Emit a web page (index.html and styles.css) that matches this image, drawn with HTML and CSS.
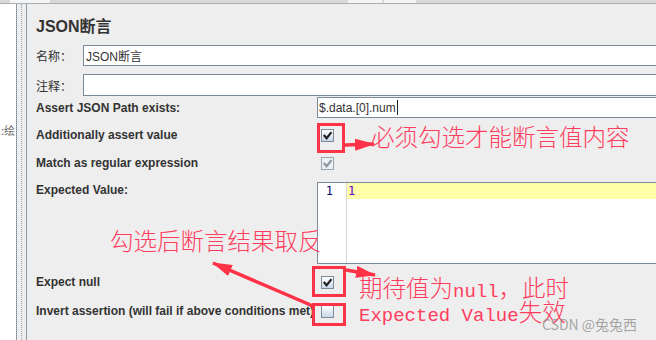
FILE: index.html
```html
<!DOCTYPE html>
<html>
<head>
<meta charset="utf-8">
<title>JSON断言</title>
<link rel="stylesheet" href="styles.css">
</head>
<body>
<div class="page">
	<div class="topbar"><span class="tab t1"></span><span class="tab t2"></span><span class="tab t3"></span></div>
	<div class="frame">
		<div class="tree"><span class="leaf">:绘</span></div>
		<div class="splitter"></div>
		<div class="panel">
			<h1>JSON断言</h1>
			<div class="field"><span class="cjk">名称：</span><div class="input">JSON断言</div></div>
			<div class="field note"><span class="cjk">注释：</span><div class="input"></div></div>

			<div class="opts">
				<div class="row path">
					<span class="lbl">Assert JSON Path exists:</span>
					<div class="input">$.data.[0].num<span class="caret"></span></div>
				</div>
				<div class="row r-add">
					<span class="lbl">Additionally assert value</span>
					<span class="check on"><svg viewBox="0 0 11 11"><path d="M2.5 5.8 L4.6 8.2 L8.8 3"/></svg></span>
				</div>
				<div class="row r-regex">
					<span class="lbl">Match as regular expression</span>
					<span class="check off"><svg viewBox="0 0 11 11"><path d="M2.5 5.8 L4.6 8.2 L8.8 3"/></svg></span>
				</div>
				<div class="row r-value">
					<span class="lbl">Expected Value:</span>
					<div class="editor">
						<div class="gutter">1</div>
						<div class="code"><div class="line">1</div></div>
					</div>
				</div>
				<div class="row r-null">
					<span class="lbl">Expect null</span>
					<span class="check on"><svg viewBox="0 0 11 11"><path d="M2.5 5.8 L4.6 8.2 L8.8 3"/></svg></span>
				</div>
				<div class="row r-invert">
					<span class="lbl">Invert assertion (will fail if above conditions met)</span>
					<span class="check"></span>
				</div>
			</div>
		</div>
	</div>

	<!-- annotations drawn over the screenshot -->
	<svg class="marks" width="656" height="340" viewBox="0 0 656 340">
		<defs>
			<marker id="head" viewBox="0 0 20 12" refX="19" refY="6" markerWidth="20" markerHeight="12" markerUnits="userSpaceOnUse" orient="auto">
				<path d="M0 0 L20 6 L0 12 z" fill="#ff3348"/>
			</marker>
		</defs>
		<rect x="318.5" y="124.5" width="25" height="27"/>
		<rect x="313.5" y="267.5" width="31" height="28"/>
		<rect x="313.5" y="304.5" width="31" height="20"/>
		<line x1="345" y1="145" x2="374" y2="144" marker-end="url(#head)"/>
		<line x1="346" y1="270" x2="375" y2="275" marker-end="url(#head)"/>
		<line x1="313" y1="306" x2="213" y2="263" marker-end="url(#head)"/>
	</svg>
	<div class="note-text n1">必须勾选才能断言值内容</div>
	<div class="note-text n2">勾选后断言结果取反</div>
	<div class="note-text n3">期待值为<span class="mono">null</span>，此时</div>
	<div class="note-text n4"><span class="mono">Expected Value</span>失效</div>
	<div class="watermark">CSDN @兔兔西</div>
</div>
</body>
</html>
```

FILE: styles.css
```css
body {
	margin: 0;
	background: #eeeeee;
	font-family: "Liberation Sans", Arial, "Noto Sans CJK SC", sans-serif;
	font-size: 12px;
	color: #333;
	overflow: hidden;
	}
.page {
	position: relative;
	width: 656px;
	height: 340px;
	overflow: hidden;
	}

/* top toolbar remnant */
.topbar {
	display: flex;
	height: 3px;
	background: #d9d9d9;
	border-bottom: 1px solid #a7b0b9;
	}
.tab { display: block; height: 3px; background: #f4f4f4; }
.t1 { width: 40px; margin-left: 10px; }
.t2 { width: 34px; margin-left: 298px; }
.t3 { width: 32px; margin-left: 2px; }

.frame {
	display: flex;
	height: 336px;
	}
.tree {
	width: 16px;
	background: #fff;
	border-right: 1px solid #8d99a5;
	overflow: hidden;
	position: relative;
	}
.leaf {
	position: absolute;
	right: 1px;
	top: 118px;
	font-family: "Noto Sans CJK SC", sans-serif;
	font-size: 11px;
	color: #666;
	white-space: nowrap;
	}
.splitter {
	width: 10px;
	background: #eee;
	border-right: 1px solid #8d99a5;
	box-sizing: border-box;
	display: flex;
	justify-content: center;
	}
.splitter::before {
	content: "";
	display: block;
	width: 0;
	border-left: 1px dotted #9aa3ac;
	margin-left: -1px;
	}
.panel {
	flex: 1;
	padding-left: 9px;
	min-width: 0;
	}

h1 {
	margin: 13px 0 0;
	font-size: 16px;
	line-height: 20px;
	font-weight: bold;
	color: #333;
	font-family: "Liberation Sans", Arial, "Noto Sans CJK SC", sans-serif;
	}

.field {
	display: flex;
	align-items: center;
	height: 21px;
	margin-top: 8px;
	}
.field.note { height: 22px; }
.cjk {
	width: 47px;
	flex: none;
	font-family: "Noto Sans CJK SC", sans-serif;
	font-size: 12px;
	color: #333;
	}
.input {
	flex: 1;
	align-self: stretch;
	background: #fff;
	border: 1px solid #7a8a99;
	margin-right: -3px;
	padding-left: 2px;
	display: flex;
	align-items: center;
	font-size: 12px;
	color: #333;
	white-space: nowrap;
	}
.caret {
	display: inline-block;
	width: 1px;
	height: 15px;
	background: #222;
	margin-left: 1px;
	}

/* assertion options */
.opts {
	margin-top: 1px;
	}
.row {
	display: grid;
	grid-template-columns: 281px 1fr;
	align-items: center;
	}
.lbl {
	font-weight: bold;
	font-size: 12px;
	color: #333;
	white-space: nowrap;
	}
.path { height: 21px; }
.path .input { margin-right: -3px; padding-left: 1px; }
.r-add { height: 34px; }
.r-regex { height: 22px; }
.r-value {
	align-items: start;
	margin-top: 8px;
	}
.r-value .lbl { padding-top: 1px; line-height: 15px; }
.r-null { height: 36px; }
.r-invert { height: 22px; }

.check {
	display: block;
	width: 13px;
	height: 13px;
	box-sizing: border-box;
	margin-left: 4px;
	border: 1px solid #7a8a99;
	background: linear-gradient(#ffffff, #c9d8e8);
	}
.check svg { display: block; width: 11px; height: 11px; }
.check path {
	fill: none;
	stroke: #222;
	stroke-width: 2.2;
	stroke-linecap: square;
	}
.check.off {
	border-color: #9aa6b2;
	background: #eef1f4;
	}
.check.off path { stroke: #8a97a4; }

/* editor */
.editor {
	display: flex;
	height: 82px;
	box-sizing: border-box;
	border: 1px solid #7a8a99;
	border-right: none;
	background: #fff;
	margin-right: -3px;
	}
.gutter {
	width: 29px;
	flex: none;
	border-right: 1px solid #d6d6d6;
	text-align: right;
	padding-right: 13px;
	box-sizing: border-box;
	font-family: "DejaVu Sans Mono", monospace;
	font-size: 12px;
	line-height: 16px;
	color: #0a0a6e;
	}
.code { flex: 1; }
.line {
	height: 16px;
	line-height: 16px;
	background: #ffffaa;
	padding-left: 1px;
	font-family: "DejaVu Sans Mono", monospace;
	font-size: 12px;
	color: #6600cc;
	}

/* annotations */
.marks {
	position: absolute;
	left: 0;
	top: 0;
	}
.marks rect {
	fill: none;
	stroke: #ff3348;
	stroke-width: 3;
	}
.marks line {
	stroke: #ff3348;
	stroke-width: 3.5;
	}
.note-text {
	position: absolute;
	font-family: "Noto Sans CJK SC", sans-serif;
	font-weight: 300;
	font-size: 23.5px;
	line-height: 24px;
	color: #ff3d5e;
	white-space: nowrap;
	}
.n1 { left: 371px; top: 124px; }
.n2 { left: 110px; top: 228px; }
.n3 { left: 359px; top: 275px; }
.n4 { left: 359px; top: 299px; }
.mono {
	font-family: "Liberation Mono", "Courier New", monospace;
	font-weight: normal;
	font-size: 19px;
	line-height: 1;
	}
.watermark {
	position: absolute;
	left: 542px;
	top: 314px;
	font-family: "Noto Sans CJK SC", sans-serif;
	font-size: 14px;
	color: rgba(140, 140, 140, 0.75);
	white-space: nowrap;
	}
```
